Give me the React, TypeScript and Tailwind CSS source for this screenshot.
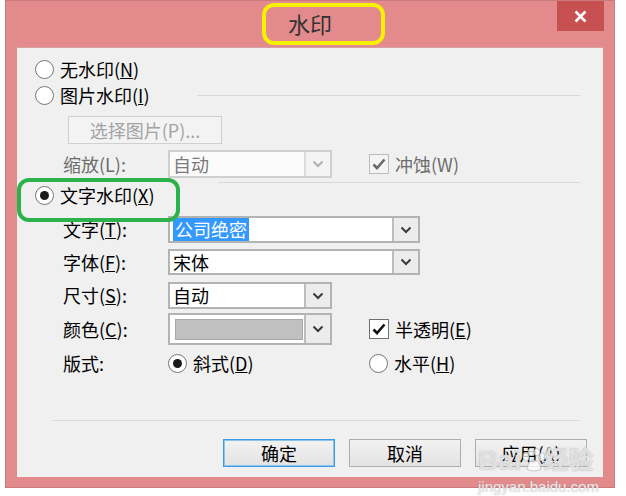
import React from 'react';

const font = { fontFamily: '"Noto Sans CJK SC", "Noto Sans", sans-serif' };

function Radio({ checked }: { checked?: boolean }) {
  return (
    <span className="flex h-[19px] w-[19px] shrink-0 items-center justify-center rounded-full border border-[#777] bg-white">
      {checked && <span className="h-[9px] w-[9px] rounded-full bg-[#1a1a1a]" />}
    </span>
  );
}

function Check({ disabled }: { disabled?: boolean }) {
  return (
    <span
      className={`flex h-[20px] w-[20px] shrink-0 items-center justify-center border ${
        disabled ? 'border-[#bcbcbc] bg-[#f4f4f4]' : 'border-[#707070] bg-white'
      }`}
    >
      <svg width="14" height="12" viewBox="0 0 14 12">
        <path
          d="M1.5 6.5 L5 10 L12.5 1.5"
          fill="none"
          stroke={disabled ? '#6a6a6a' : '#111'}
          strokeWidth="2.6"
        />
      </svg>
    </span>
  );
}

function Chevron({ color = '#333' }: { color?: string }) {
  return (
    <svg width="12" height="8" viewBox="0 0 12 8">
      <path d="M1.5 1.5 L6 6 L10.5 1.5" fill="none" stroke={color} strokeWidth="2" />
    </svg>
  );
}

function Combo({
  width,
  height,
  children,
  disabled,
}: {
  width: string;
  height: string;
  children?: React.ReactNode;
  disabled?: boolean;
}) {
  return (
    <div
      className={`flex ${width} ${height} border-2 ${
        disabled ? 'border-[#cfcfcf] bg-[#fbfbfb]' : 'border-[#b3b3b3] bg-white'
      }`}
    >
      <div className="flex flex-1 items-center pl-[3px]">{children}</div>
      <div
        className={`flex w-[26px] items-center justify-center border-l-2 ${
          disabled ? 'border-[#dcdcdc] bg-[#f4f4f4]' : 'border-[#bdbdbd] bg-[#ececec]'
        }`}
      >
        <Chevron color={disabled ? '#b0b0b0' : '#3a3a3a'} />
      </div>
    </div>
  );
}

function Label({ children, gray }: { children: React.ReactNode; gray?: boolean }) {
  return (
    <span className={`ml-[46px] w-[105px] shrink-0 ${gray ? 'text-[#6d6d6d]' : 'text-black'}`}>
      {children}
    </span>
  );
}

function DlgButton({ children, primary }: { children: React.ReactNode; primary?: boolean }) {
  return (
    <button
      className={`flex h-[28px] w-[112px] items-center justify-center border bg-gradient-to-b from-[#f2f2f2] to-[#e3e3e3] text-[18px] text-black ${
        primary ? 'border-[#3d9ae6] shadow-[inset_0_0_0_1px_#8cc4f0]' : 'border-[#adadad]'
      }`}
    >
      {children}
    </button>
  );
}

export default function App() {
  return (
    <div className="relative h-[496px] w-[626px] overflow-hidden bg-white" style={font}>
      <div className="ml-[5px] flex h-[488px] w-[610px] flex-col border border-[#c97a7c] bg-[#e28a8c]">
        {/* Title bar */}
        <div className="grid h-[46px] grid-cols-[1fr_auto_1fr]">
          <div />
          <div className="flex items-center pb-[2px] text-[22px] text-[#333]">水印</div>
          <div className="flex justify-end">
            <div className="mr-[10px] flex h-[30px] w-[47px] items-center justify-center bg-[#c75050]">
              <svg width="13" height="13" viewBox="0 0 13 13">
                <path d="M1.5 1.5 L11.5 11.5 M11.5 1.5 L1.5 11.5" stroke="#fff" strokeWidth="2.6" />
              </svg>
            </div>
          </div>
        </div>

        {/* Client area */}
        <div className="ml-[11px] flex h-[430px] w-[586px] flex-col border-t border-[#d9a0a1] bg-[#f0f0f0] text-[18px] leading-tight">
          <div className="mt-[8px] flex h-[26px] items-center pl-[18px]">
            <Radio />
            <span className="ml-[6px]">
              无水印(<u>N</u>)
            </span>
          </div>

          <div className="flex h-[26px] items-center pl-[18px]">
            <Radio />
            <span className="ml-[6px]">
              图片水印(<u>I</u>)
            </span>
            <div className="ml-auto mr-[23px] h-px w-[383px] bg-[#d7d7d7]" />
          </div>

          <div className="ml-[51px] mt-[8px] flex h-[28px] w-[154px] items-center justify-center border border-[#d0d0d0] bg-[#f3f3f3] text-[#a3a3a3]">
            选择图片(P)...
          </div>

          <div className="mt-[6px] flex h-[28px] items-center">
            <Label gray>缩放(L):</Label>
            <Combo width="w-[164px]" height="h-[28px]" disabled>
              <span className="text-[#7a7a7a]">自动</span>
            </Combo>
            <span className="ml-[37px]">
              <Check disabled />
            </span>
            <span className="ml-[6px] text-[#6d6d6d]">冲蚀(W)</span>
          </div>

          <div className="mt-[4px] flex h-[26px] items-center pl-[18px]">
            <Radio checked />
            <span className="ml-[6px]">
              文字水印(<u>X</u>)
            </span>
            <div className="ml-auto mr-[23px] h-px w-[362px] self-start bg-[#d7d7d7]" />
          </div>

          <div className="mt-[8px] flex h-[27px] items-center">
            <Label>
              文字(<u>T</u>):
            </Label>
            <Combo width="w-[252px]" height="h-[27px]">
              <span className="bg-[#3399ff] px-[2px] text-white">公司绝密</span>
            </Combo>
          </div>

          <div className="mt-[6px] flex h-[26px] items-center">
            <Label>
              字体(<u>F</u>):
            </Label>
            <Combo width="w-[252px]" height="h-[26px]">
              <span>宋体</span>
            </Combo>
          </div>

          <div className="mt-[7px] flex h-[27px] items-center">
            <Label>
              尺寸(<u>S</u>):
            </Label>
            <Combo width="w-[164px]" height="h-[27px]">
              <span>自动</span>
            </Combo>
          </div>

          <div className="mt-[4px] flex h-[32px] items-center">
            <Label>
              颜色(<u>C</u>):
            </Label>
            <Combo width="w-[164px]" height="h-[32px]">
              <div className="ml-[2px] h-[21px] w-[128px] border border-[#a9a9a9] bg-[#c0c0c0]" />
            </Combo>
            <span className="ml-[37px]">
              <Check />
            </span>
            <span className="ml-[6px]">
              半透明(<u>E</u>)
            </span>
          </div>

          <div className="mt-[5px] flex h-[26px] items-center">
            <Label>版式:</Label>
            <div className="flex w-[201px] items-center">
              <Radio checked />
              <span className="ml-[6px]">
                斜式(<u>D</u>)
              </span>
            </div>
            <Radio />
            <span className="ml-[6px]">
              水平(<u>H</u>)
            </span>
          </div>

          <div className="ml-[35px] mt-[44px] h-px w-[528px] bg-[#dcdcdc]" />

          <div className="ml-[206px] mt-[18px] flex gap-[14px]">
            <DlgButton primary>确定</DlgButton>
            <DlgButton>取消</DlgButton>
            <DlgButton>
              应用(<u>A</u>)
            </DlgButton>
          </div>
        </div>
      </div>

      {/* Annotation marks */}
      <div className="absolute left-[262px] top-[3px] h-[42px] w-[123px] rounded-[12px] border-[4px] border-[#f7f000]" />
      <div className="absolute left-[17px] top-[178px] h-[44px] w-[163px] rounded-[12px] border-[4px] border-[#2bb24c]" />

      {/* Site watermark */}
      <div
        className="pointer-events-none absolute left-[478px] top-[440px] flex items-center text-[28px] font-bold text-white/70"
        style={{ fontFamily: '"Liberation Sans", "Noto Sans CJK SC", sans-serif', textShadow: '0 0 1px #999' }}
      >
        <span>Bai</span>
        <svg width="26" height="26" viewBox="0 0 26 26" className="-mx-[2px]">
          <g fill="rgba(255,255,255,0.75)" stroke="#aaa" strokeWidth="0.6">
            <ellipse cx="6" cy="9" rx="3" ry="4" />
            <ellipse cx="11" cy="4" rx="3" ry="3.5" />
            <ellipse cx="17" cy="4" rx="3" ry="3.5" />
            <ellipse cx="22" cy="9" rx="3" ry="4" />
            <path d="M7 21 Q8 13 14 12 Q20 13 21 21 Q14 25 7 21 Z" />
          </g>
        </svg>
        <span className="text-[25px]">经验</span>
      </div>
      <div
        className="pointer-events-none absolute left-[478px] top-[476px] text-[15px] text-white/80"
        style={{ fontFamily: '"Liberation Sans", sans-serif', textShadow: '0 0 1px #999' }}
      >
        jingyan.baidu.com
      </div>
    </div>
  );
}
